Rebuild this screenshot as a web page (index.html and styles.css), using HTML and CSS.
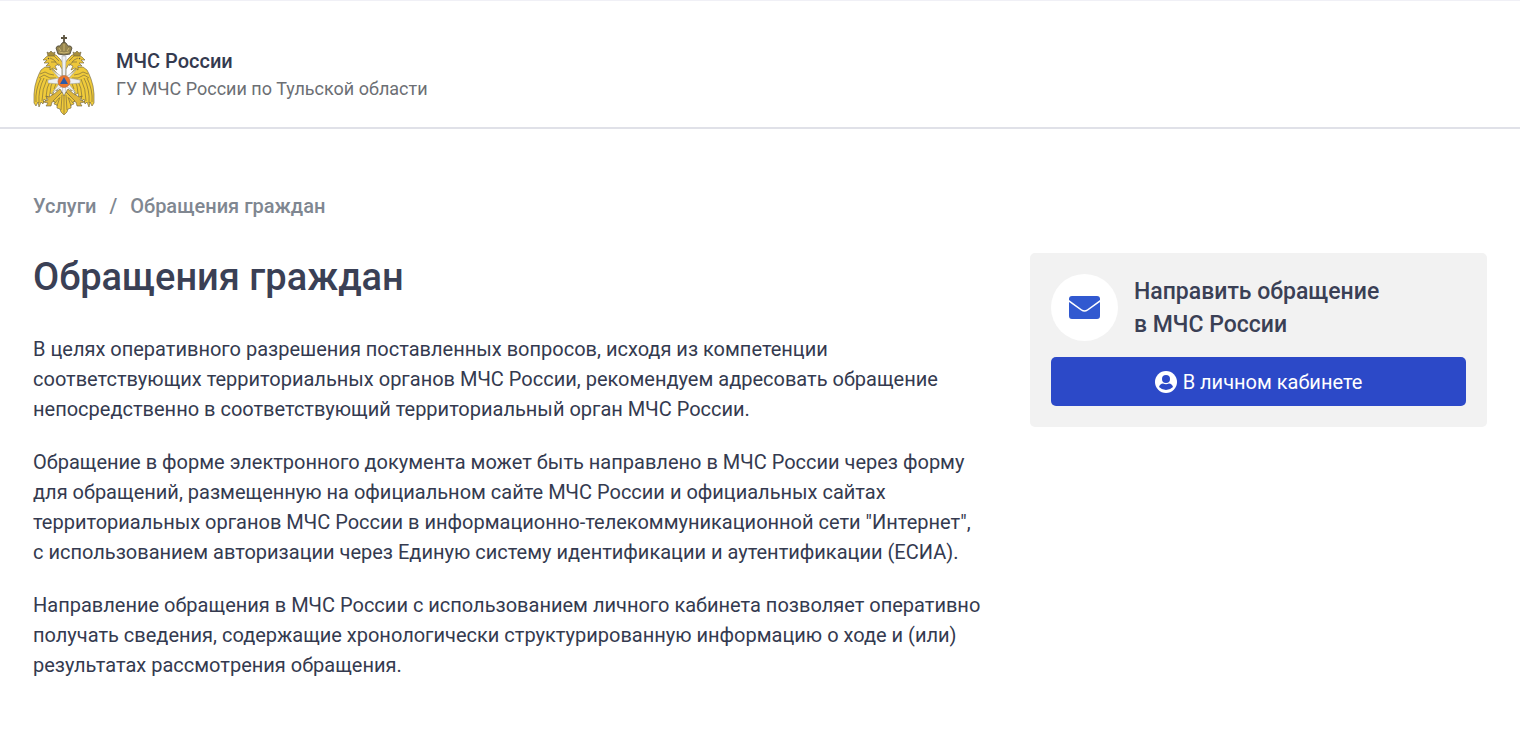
FILE: index.html
```html
<!DOCTYPE html>
<html lang="ru">
<head>
    <meta charset="UTF-8">
    <meta name="viewport" content="width=device-width, initial-scale=1.0">
    <title>Обращения граждан</title>
    <link rel="stylesheet" href="styles.css">
</head>
<body>
    <header class="header">
        <!-- Эмблема -->
        <svg class="emblem" viewBox="0 0 60 80" aria-hidden="true">
            <defs>
                <g id="half" stroke="#6b603c" stroke-width=".6" stroke-linejoin="round">
                    <!-- Крыло -->
                    <path fill="#f0cb3a" d="M25 41L21 36Q17 31 11 32L7 35L5 39L3 44L1 51L0 59V68L2 71L4 67L5 72L7 67L9 69L10 64L12 66L13 61L15 63L16 58L19 60L20 55L23 56L25 51Z"/>
                    <path fill="none" d="M2 67Q1 55 7 43M5 68Q4 55 10 43M8 66Q8 54 13 44M12 62Q12 53 17 44M16 58Q16 51 20 44M20 54L23 46M6 39L11 37L15 39L20 40M5 43L10 40L16 43L22 43"/>
                    <!-- Голова и шея -->
                    <path fill="#edc63a" d="M28 42V34L25 29L21 31L23 35L19 33L16 35V31L12 31L15 28L10 28L13 25L9 25L12 22L17 19L22 20L26 24L29 28V42Z"/>
                    <path fill="none" d="M16 23L20 25L25 31M17 27L22 27M20 21L25 26"/>
                    <path fill="#a88f3d" d="M14 21L13 17L15 18L17 16L19 18L21 17L20 21Z"/>
                    <circle cx="14.500" cy="23.500" r=".5" fill="#333"/>
                    <!-- Лапа -->
                    <path fill="#dfb73b" d="M26 54L20 59L15 62L12 61L14 65L9 67L14 68L12 71L17 71L18 67L22 66L24 61L28 57Z"/>
                </g>
            </defs>
            <use href="#half"/>
            <use href="#half" transform="matrix(-1 0 0 1 60 0)"/>
            <!-- Белый крест -->
            <path fill="#eef0f3" stroke="#9a9c98" stroke-width=".5" d="M28 21H32L31.500 42L42 35L35 43L46 45V48L35 49L42 58L31.500 51L32 61H28L28.500 51L18 58L25 49L14 48V45L25 43L18 35L28.500 42Z"/>
            <!-- Хвост -->
            <path fill="#efc93a" stroke="#6b603c" stroke-width=".6" stroke-linejoin="round" d="M28 57L25 60L19 66L21 67L20 69L23 70L23 73L26 74L27 77L30 80L33 77L34 74L37 73L37 70L40 69L39 67L41 66L35 60L32 57L30 61Z"/>
            <path fill="none" stroke="#6b603c" stroke-width=".6" d="M30 61V79M28 60L27 75M32 60L33 75M26 62L23 71M34 62L37 71M25 63L21 68M35 63L39 68"/>
            <!-- Корона -->
            <path fill="#94844f" stroke="#4a4538" stroke-width=".8" d="M24 19L22 13Q23 10 26 11Q28 7 30 7Q32 7 34 11Q37 10 38 13L36 19Q30 21 24 19Z"/>
            <path fill="none" stroke="#d9c27a" stroke-width=".8" d="M25 17Q30 19 35 17M25 13L27 16M35 13L33 16M30 9V16"/>
            <path fill="none" stroke="#5d5541" stroke-width="1.800" d="M30 0V8M27 3H33"/>
            <!-- Щит с треугольником -->
            <circle cx="30" cy="46.500" r="6" fill="#ee772c" stroke="#a9683e" stroke-width=".6"/>
            <path fill="#2c5aa8" d="M30 42L34 49H26Z"/>
        </svg>
        <div>
            <div class="header-title">МЧС России</div>
            <div class="header-subtitle">ГУ МЧС России по Тульской области</div>
        </div>
    </header>

    <div class="container">
        <nav class="breadcrumbs">
            <a href="#">Услуги</a>
            <span>/</span>
            <a href="#">Обращения граждан</a>
        </nav>

        <div class="columns">
            <main class="content">
                <h1>Обращения граждан</h1>
                <p>В целях оперативного разрешения поставленных вопросов, исходя из компетенции<br>
                соответствующих территориальных органов МЧС России, рекомендуем адресовать обращение<br>
                непосредственно в соответствующий территориальный орган МЧС России.</p>
                <p>Обращение в форме электронного документа может быть направлено в МЧС России через форму<br>
                для обращений, размещенную на официальном сайте МЧС России и официальных сайтах<br>
                территориальных органов МЧС России в информационно-телекоммуникационной сети "Интернет",<br>
                с использованием авторизации через Единую систему идентификации и аутентификации (ЕСИА).</p>
                <p>Направление обращения в МЧС России с использованием личного кабинета позволяет оперативно<br>
                получать сведения, содержащие хронологически структурированную информацию о ходе и (или)<br>
                результатах рассмотрения обращения.</p>
            </main>

            <!-- Отправка обращения -->
            <aside class="card">
                <div class="card-head">
                    <div class="card-icon">
                        <svg width="31" height="23" viewBox="0 0 31 23" aria-hidden="true">
                            <path fill="#3159d0" d="M3 0H28Q31 0 31 3V4L18 13.500Q15.500 15 13 13.500L0 4V3Q0 0 3 0Z"/>
                            <path fill="#3159d0" d="M0 6L12 14.500Q15.500 17 19 14.500L31 6V20Q31 23 28 23H3Q0 23 0 20Z"/>
                        </svg>
                    </div>
                    <h2>Направить обращение<br>в МЧС России</h2>
                </div>
                <button type="button" class="button">
                    <svg width="22" height="22" viewBox="0 0 22 22" aria-hidden="true">
                        <circle cx="11" cy="11" r="11" fill="#fff"/>
                        <circle cx="11" cy="8" r="4" fill="#2c49c8"/>
                        <path fill="#2c49c8" d="M4 16Q5 12.500 8 12.500Q11 14 14 12.500Q17 12.500 18 16Q15 19 11 19Q7 19 4 16Z"/>
                    </svg>
                    В личном кабинете
                </button>
            </aside>
        </div>
    </div>
</body>
</html>
```
FILE: styles.css
```css
* {
    box-sizing: border-box;
}
body {
    font-family: Roboto, "Liberation Sans", sans-serif;
    font-size: 20px;
    line-height: 30px;
    color: #343a4f;
    background-color: #fff;
    margin: 0;
}
.header {
    display: flex;
    align-items: center;
    gap: 21px;
    padding: 34px 33px 12px;
    border-top: 1px solid #f0f0f6;
    border-bottom: 2px solid #e0e1e8;
}
.emblem {
    width: 62px;
    height: 80px;
}
.header-title {
    font-weight: 500;
    line-height: 28px;
}
.header-subtitle {
    font-size: 18px;
    line-height: 28px;
    color: #6c6f74;
}
.container {
    padding: 62px 33px 40px;
}
.breadcrumbs {
    display: flex;
    gap: 13px;
    font-weight: 500;
    color: #808791;
}
.breadcrumbs a {
    color: inherit;
    text-decoration: none;
}
.columns {
    display: flex;
    align-items: flex-start;
    gap: 40px;
    margin-top: 32px;
}
.content {
    flex: 1;
}
h1 {
    margin: 0 0 33px;
    font-size: 38px;
    line-height: 48px;
    font-weight: 500;
    color: #3a4055;
}
p {
    margin: 0 0 23px;
}
.card {
    flex: 0 0 457px;
    padding: 21px;
    border-radius: 5px;
    background-color: #f2f2f2;
}
.card-head {
    display: flex;
    align-items: center;
    gap: 16px;
    margin-bottom: 16px;
}
.card-icon {
    display: flex;
    align-items: center;
    justify-content: center;
    width: 67px;
    height: 67px;
    border-radius: 50%;
    background-color: #fff;
}
h2 {
    margin: 0;
    font-size: 23px;
    line-height: 33px;
    font-weight: 500;
    color: #3a4055;
}
.button {
    display: flex;
    align-items: center;
    justify-content: center;
    gap: 6px;
    width: 100%;
    height: 49px;
    border: none;
    border-radius: 5px;
    background-color: #2c49c8;
    color: #fff;
    font-family: inherit;
    font-size: 20px;
    cursor: pointer;
}
.button:hover {
    background-color: #233cab;
}
```
